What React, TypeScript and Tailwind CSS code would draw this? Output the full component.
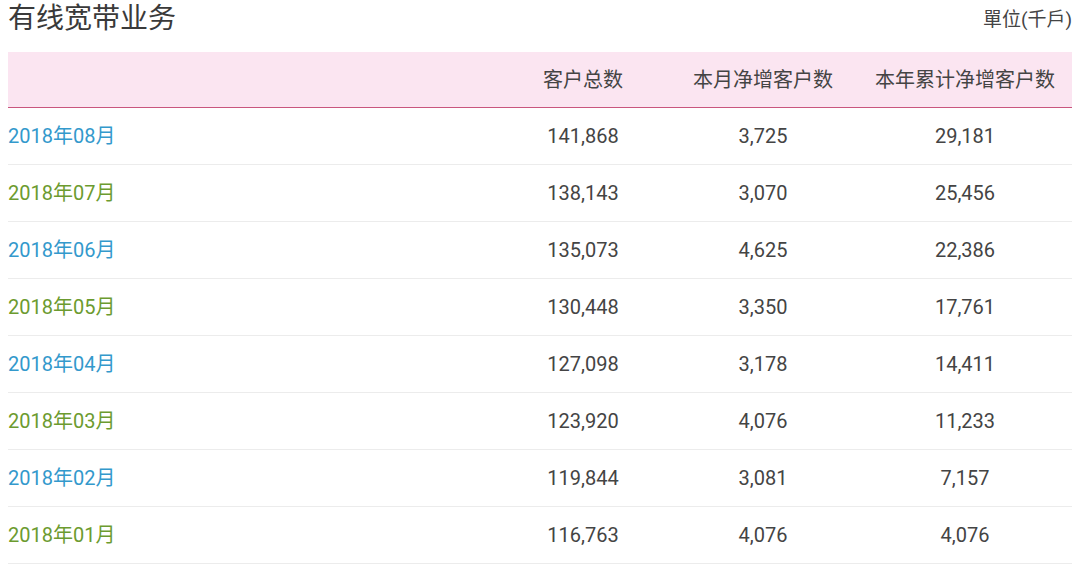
import React from "react";

const rows = [
  ["2018年08月", "141,868", "3,725", "29,181"],
  ["2018年07月", "138,143", "3,070", "25,456"],
  ["2018年06月", "135,073", "4,625", "22,386"],
  ["2018年05月", "130,448", "3,350", "17,761"],
  ["2018年04月", "127,098", "3,178", "14,411"],
  ["2018年03月", "123,920", "4,076", "11,233"],
  ["2018年02月", "119,844", "3,081", "7,157"],
  ["2018年01月", "116,763", "4,076", "4,076"],
];

const font = { fontFamily: 'Roboto, "Noto Sans CJK SC", sans-serif' };

export default function App() {
  return (
    <div className="w-[1080px] h-[568px] bg-white px-2 overflow-hidden text-[#444]" style={font}>
      <div className="flex items-center justify-between h-[52px] pb-[14px]">
        <div className="text-[28px] leading-none text-[#3a3a3a]">有线宽带业务</div>
        <div className="text-[19px] leading-none text-[#444]">單位(千戶)</div>
      </div>
      <div className="grid grid-cols-[490px_170px_190px_214px] h-[56px] items-center bg-[#fbe5f1] border-b border-[#c9567e] text-[20px]">
        <div></div>
        <div className="text-center">客户总数</div>
        <div className="text-center">本月净增客户数</div>
        <div className="text-center">本年累计净增客户数</div>
      </div>
      {rows.map((r, i) => (
        <div
          key={i}
          className="grid grid-cols-[490px_170px_190px_214px] h-[57px] items-center border-b border-[#ececec] text-[20px]"
        >
          <div className={i % 2 === 0 ? "text-[#3399cc]" : "text-[#6c9b2f]"}>{r[0]}</div>
          <div className="text-center">{r[1]}</div>
          <div className="text-center">{r[2]}</div>
          <div className="text-center">{r[3]}</div>
        </div>
      ))}
    </div>
  );
}
